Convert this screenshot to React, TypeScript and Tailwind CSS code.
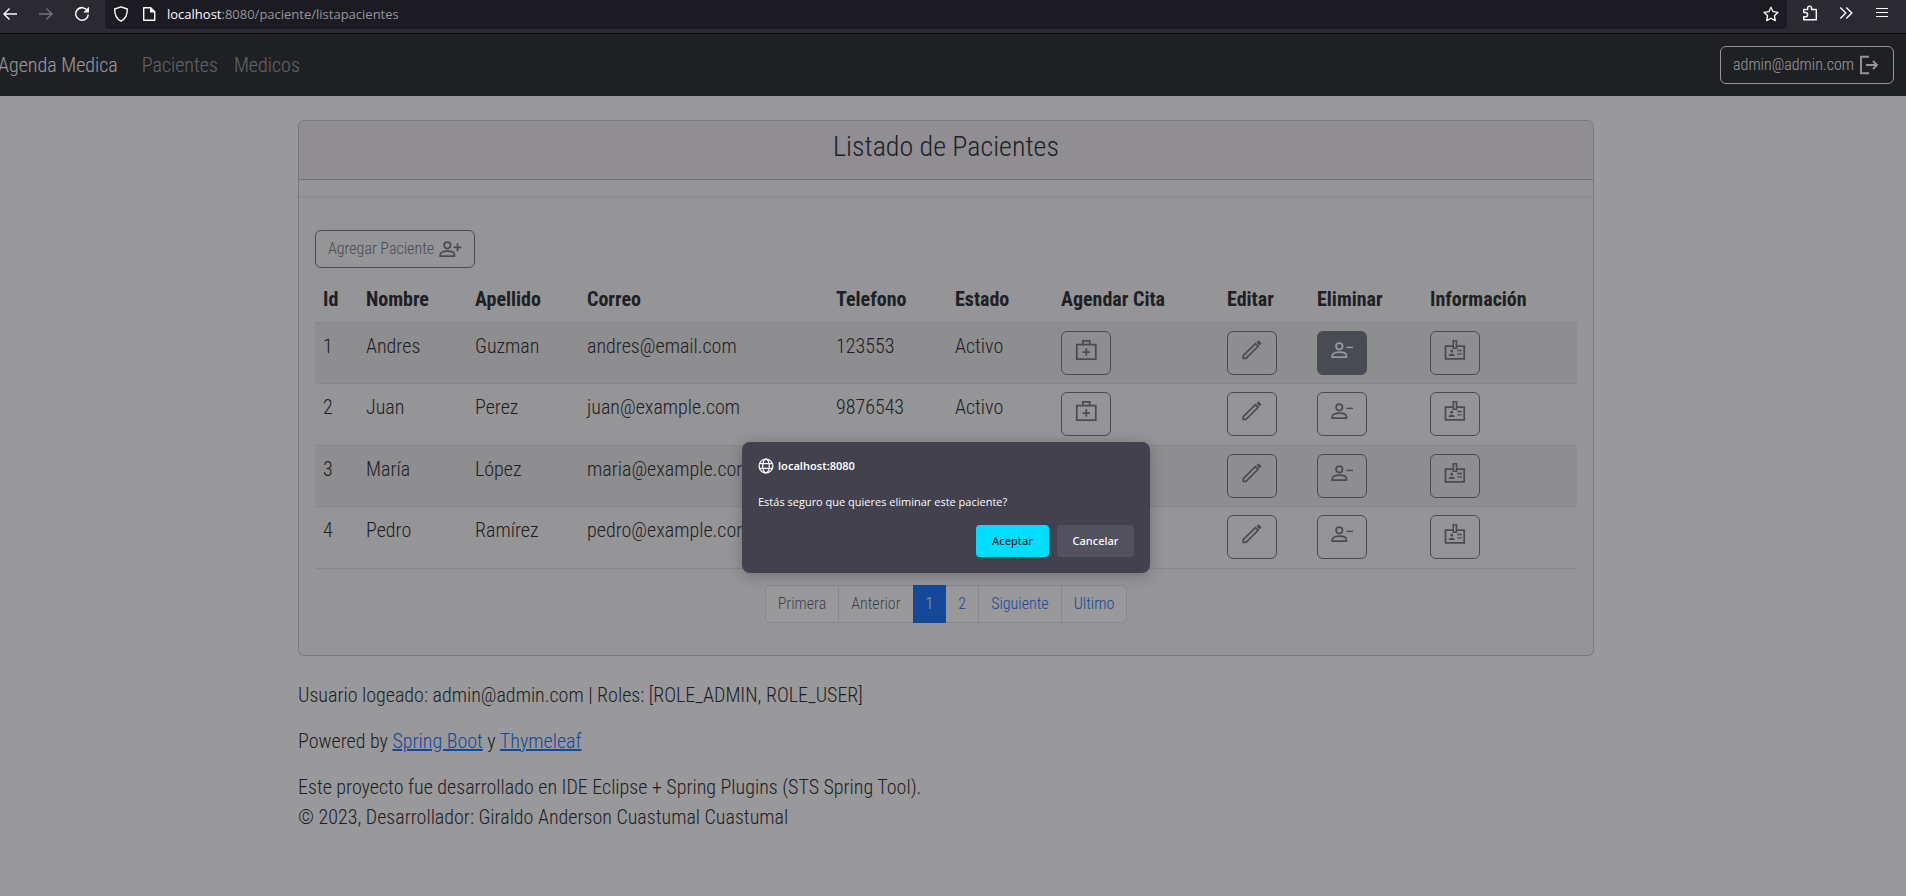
import type { ReactNode } from "react";

type Patient = {
  id: number;
  nombre: string;
  apellido: string;
  correo: string;
  telefono: string;
  estado: string;
};

const patients: Patient[] = [
  { id: 1, nombre: "Andres", apellido: "Guzman", correo: "andres@email.com", telefono: "123553", estado: "Activo" },
  { id: 2, nombre: "Juan", apellido: "Perez", correo: "juan@example.com", telefono: "9876543", estado: "Activo" },
  { id: 3, nombre: "María", apellido: "López", correo: "maria@example.com", telefono: "", estado: "" },
  { id: 4, nombre: "Pedro", apellido: "Ramírez", correo: "pedro@example.com", telefono: "", estado: "" },
];

const columns = [
  { label: "Id", width: "w-[43px]" },
  { label: "Nombre", width: "w-[109px]" },
  { label: "Apellido", width: "w-[112px]" },
  { label: "Correo", width: "w-[249px]" },
  { label: "Telefono", width: "w-[119px]" },
  { label: "Estado", width: "w-[106px]" },
  { label: "Agendar Cita", width: "w-[166px]" },
  { label: "Editar", width: "w-[90px]" },
  { label: "Eliminar", width: "w-[113px]" },
  { label: "Información", width: "w-[155px]" },
];

function Icon({ children, className = "size-6" }: { children: ReactNode; className?: string }) {
  return (
    <svg viewBox="0 0 24 24" fill="none" stroke="currentColor" strokeWidth="1.75" className={className} aria-hidden="true">
      {children}
    </svg>
  );
}

function Person() {
  return (
    <>
      <circle cx="9.3" cy="8.3" r="3.2" />
      <path d="M2.2 19.2v-1.7c0-2.2 3.6-3.4 7.1-3.4s7.1 1.2 7.1 3.4v1.7z" />
    </>
  );
}

const PersonAddIcon = () => (
  <Icon>
    <Person />
    <path d="M19.5 6.3v8M15.5 10.3h8" />
  </Icon>
);

const PersonRemoveIcon = () => (
  <Icon>
    <Person />
    <path d="M16.4 9.4H23" strokeWidth="1.4" />
  </Icon>
);

const MedkitIcon = () => (
  <Icon>
    <path d="M2.8 6.5h19v14.6h-19zM8.8 6.5V2.9h7v3.6M12.3 10.3v7.4M8.6 14H16" />
  </Icon>
);

const PencilIcon = () => (
  <Icon>
    <path d="M3.2 20.4v-2.8L15.4 5.6l2.7 2.7L6 20.4z" strokeWidth="1.7" />
    <path d="M16.7 4.3l1.8-1.8 2.9 2.9-1.8 1.8z" fill="currentColor" strokeWidth=".4" />
  </Icon>
);

const BadgeIcon = () => (
  <Icon>
    <path d="M9.9 8.1H2.5v12.8h18.7V8.1h-7.3" />
    <path d="M10.3 2.8h3.2v7.4h-3.2z" strokeWidth="1.6" />
    <circle cx="8.7" cy="13.2" r="1.4" fill="currentColor" stroke="none" />
    <path d="M5.7 18v-.6c0-1 1.5-1.6 3-1.6s3 .6 3 1.6v.6z" fill="currentColor" stroke="none" />
    <path d="M14.3 12.5h4.5M14.3 15.8h4.5" strokeWidth="1.3" />
  </Icon>
);

const outline = "border border-[#6c757d] text-[#6c757d] rounded-md";

function IconButton({ label, active = false, children }: { label: string; active?: boolean; children: ReactNode }) {
  return (
    <button
      type="button"
      aria-label={label}
      className={`flex h-11 w-[50px] justify-center pt-1.5 ${active ? "rounded-md border border-[#6c757d] bg-[#6c757d] text-white" : outline}`}
    >
      {children}
    </button>
  );
}

function BrowserBar() {
  return (
    <header className="flex h-[34px] items-start border-b border-[#0c0c0d] bg-[#2b2a33] text-[#fbfbfe]">
      <div className="flex h-7 w-[105px] shrink-0 items-center">
        <button type="button" aria-label="Atrás" className="w-[38px]">
          <svg viewBox="0 0 16 16" className="ml-0.5 size-4" fill="none" stroke="currentColor" strokeWidth="1.4">
            <path d="M15 8H2M7.5 2.5L2 8l5.500 5.500" />
          </svg>
        </button>
        <button type="button" aria-label="Adelante" className="w-9 text-[#75747b]">
          <svg viewBox="0 0 16 16" className="size-4" fill="none" stroke="currentColor" strokeWidth="1.4">
            <path d="M1 8h13M8.500 2.500L14 8l-5.500 5.500" />
          </svg>
        </button>
        <button type="button" aria-label="Recargar">
          <svg viewBox="0 0 16 16" className="size-4" fill="none" stroke="currentColor" strokeWidth="1.500">
            <path d="M13.600 5A6.300 6.300 0 1 0 14.300 8.500" />
            <path d="M15 .8v5.700H9.300z" fill="currentColor" stroke="none" />
          </svg>
        </button>
      </div>
      <div className="flex h-[29px] flex-1 items-center rounded-b bg-[#1c1b22] pb-0.5 pl-2 pr-2">
        <svg viewBox="0 0 16 16" className="size-4" fill="none" stroke="currentColor" strokeWidth="1.400" aria-hidden="true">
          <path d="M8 .8l6.300 2.200c.2 5.800-1.800 9.800-6.300 12.200C3.500 12.800 1.500 8.800 1.700 3z" strokeLinejoin="round" />
        </svg>
        <svg viewBox="0 0 16 16" className="ml-3 size-4" fill="none" stroke="currentColor" strokeWidth="1.400" aria-hidden="true">
          <path d="M2.700 1.700h7l4 4v8.600h-11z" strokeLinejoin="round" />
          <path d="M9 1.200v5.300h5.300z" fill="currentColor" stroke="none" />
        </svg>
        <p className="ml-2.5 flex-1 font-['Open_Sans',sans-serif] text-[13px] leading-5 text-[#95949b]">
          <span className="text-[#fbfbfe]">localhost</span>:8080/paciente/listapacientes
        </p>
        <button type="button" aria-label="Marcador">
          <svg viewBox="0 0 16 16" className="size-4" fill="none" stroke="currentColor" strokeWidth="1.300" strokeLinejoin="round">
            <path d="M8 1.200l2.100 4.500 4.900.6-3.600 3.400.9 4.900L8 12.200l-4.300 2.400.9-4.900L1 6.300l4.900-.6z" />
          </svg>
        </button>
      </div>
      <div className="flex h-[26px] w-[119px] shrink-0 items-center pl-[15px]">
        <button type="button" aria-label="Extensiones" className="w-9">
          <svg viewBox="0 0 16 16" className="size-4" fill="none" stroke="currentColor" strokeWidth="1.400" strokeLinejoin="round">
            <path d="M1.700 7.500V4.500h4V3a1.900 1.900 0 0 1 3.800 0v1.500h4.800v10.300H1.700v-3h1.800a2.100 2.100 0 0 0 0-4.300z" />
          </svg>
        </button>
        <button type="button" aria-label="Más herramientas" className="w-9">
          <svg viewBox="0 0 16 16" className="size-4" fill="none" stroke="currentColor" strokeWidth="1.400">
            <path d="M2.300 2.500L7.800 8l-5.500 5.500M8.300 2.500L13.800 8l-5.500 5.500" />
          </svg>
        </button>
        <button type="button" aria-label="Menú">
          <svg viewBox="0 0 16 16" className="size-4" fill="none" stroke="currentColor" strokeWidth="1.200">
            <path d="M2 3.500h12M2 7.500h12M2 11.500h12" />
          </svg>
        </button>
      </div>
    </header>
  );
}

function Navbar() {
  return (
    <nav className="flex h-[62px] items-center bg-[#212529] px-3">
      <a href="#inicio" className="text-xl text-white">Agenda Medica</a>
      <a href="#pacientes" className="ml-6 text-xl text-white/55">Pacientes</a>
      <a href="#medicos" className="ml-4 text-xl text-white/55">Medicos</a>
      <button type="button" className="ml-auto flex h-[38px] items-center gap-[3px] rounded-md border border-[#f8f9fa] px-3 text-base text-[#f8f9fa]">
        admin@admin.com
        <Icon>
          <path d="M12 3.800H4v16.400h8M9 12h11M16 8l4 4-4 4" strokeWidth="1.900" />
        </Icon>
      </button>
    </nav>
  );
}

function PatientTable() {
  return (
    <table className="mt-2 w-full table-fixed border-collapse text-xl leading-[30px]">
      <thead>
        <tr className="h-[46px] border-b border-[#dee2e6]">
          {columns.map((c) => (
            <th key={c.label} scope="col" className={`p-2 text-left font-bold ${c.width}`}>
              {c.label}
            </th>
          ))}
        </tr>
      </thead>
      <tbody>
        {patients.map((p) => (
          <tr key={p.id} className="h-[61px] border-b border-[#dee2e6] align-top odd:bg-black/5 even:h-[62px]">
            <td className="p-2">{p.id}</td>
            <td className="p-2">{p.nombre}</td>
            <td className="p-2">{p.apellido}</td>
            <td className="p-2">{p.correo}</td>
            <td className="p-2">{p.telefono}</td>
            <td className="p-2">{p.estado}</td>
            <td className="p-2"><IconButton label="Agendar cita"><MedkitIcon /></IconButton></td>
            <td className="p-2"><IconButton label="Editar"><PencilIcon /></IconButton></td>
            <td className="p-2"><IconButton label="Eliminar" active={p.id === 1}><PersonRemoveIcon /></IconButton></td>
            <td className="p-2"><IconButton label="Información"><BadgeIcon /></IconButton></td>
          </tr>
        ))}
      </tbody>
    </table>
  );
}

const pages = [
  { label: "Primera", style: "border-[#dee2e6] bg-white text-[#212529bf]" },
  { label: "Anterior", style: "border-[#dee2e6] bg-white text-[#212529bf]" },
  { label: "1", style: "z-10 border-[#0d6efd] bg-[#0d6efd] text-white" },
  { label: "2", style: "border-[#dee2e6] bg-white text-[#0d6efd]" },
  { label: "Siguiente", style: "border-[#dee2e6] bg-white text-[#0d6efd]" },
  { label: "Ultimo", style: "border-[#dee2e6] bg-white text-[#0d6efd]" },
];

function Pagination() {
  return (
    <ul className="my-4 flex justify-center text-base">
      {pages.map((p) => (
        <li key={p.label} className="group -ml-px first:ml-0">
          <a
            href={`#${p.label}`}
            className={`relative block border px-3 py-1.5 group-first:rounded-l-md group-last:rounded-r-md ${p.style}`}
          >
            {p.label}
          </a>
        </li>
      ))}
    </ul>
  );
}

function ConfirmDialog() {
  return (
    <div className="absolute inset-0 z-20 flex items-start justify-center bg-[#1c1b20]/45 pt-[408px]">
      <div
        role="alertdialog"
        aria-labelledby="dialog-title"
        aria-describedby="dialog-text"
        className="w-[408px] rounded-lg bg-[#42414d] p-4 font-['Noto_Sans',sans-serif] text-[11px] font-medium leading-4 text-[#fbfbfe] shadow-[0_2px_14px_rgba(58,57,68,0.4)]"
      >
        <h2 id="dialog-title" className="flex items-center gap-1 font-semibold">
          <svg viewBox="0 0 16 16" className="size-4" fill="none" stroke="currentColor" strokeWidth="1.300" aria-hidden="true">
            <circle cx="8" cy="8" r="6.900" />
            <ellipse cx="8" cy="8" rx="3.300" ry="6.900" />
            <path d="M1.500 5.700h13M1.500 10.300h13" />
          </svg>
          localhost:8080
        </h2>
        <p id="dialog-text" className="mt-5 font-['Open_Sans',sans-serif]">Estás seguro que quieres eliminar este paciente?</p>
        <div className="mt-[15px] flex justify-end gap-2">
          <button type="button" className="h-8 w-[73px] rounded bg-[#00ddff] text-[#2b2a33]">Aceptar</button>
          <button type="button" className="h-8 w-[77px] rounded bg-[#52515e]">Cancelar</button>
        </div>
      </div>
    </div>
  );
}

export default function App() {
  return (
    <div className="flex min-h-screen flex-col overflow-x-clip bg-white">
      <BrowserBar />
      <div className="relative -ml-3.5 flex-1 bg-white font-['Roboto_Condensed',Roboto,sans-serif] font-light text-[#212529]">
        <Navbar />
        <main className="mx-auto mt-6 max-w-[1296px]">
          <section className="rounded-md border border-black/20 bg-[#f8f8f8]">
            <h1 className="h-[59px] rounded-t-[5px] border-b border-black/20 bg-[#eeecf3] pt-[9px] text-center text-[28px] leading-[34px]">
              Listado de Pacientes
            </h1>
            <hr className="my-4 border-t-2 border-[#212529]/5" />
            <div className="p-4">
              <button type="button" className={`flex h-[38px] items-center gap-1 px-3 text-base ${outline}`}>
                Agregar Paciente
                <PersonAddIcon />
              </button>
              <PatientTable />
              <Pagination />
            </div>
          </section>
          <footer className="mt-6 text-xl leading-[30px]">
            <p>Usuario logeado: admin@admin.com | Roles: [ROLE_ADMIN, ROLE_USER]</p>
            <p className="mt-4">
              Powered by <a href="#spring" className="text-[#0d6efd] underline">Spring Boot</a> y{" "}
              <a href="#thymeleaf" className="text-[#0d6efd] underline">Thymeleaf</a>
            </p>
            <p className="mt-4">
              Este proyecto fue desarrollado en IDE Eclipse + Spring Plugins (STS Spring Tool).
              <br />© 2023, Desarrollador: Giraldo Anderson Cuastumal Cuastumal
            </p>
          </footer>
        </main>
        <ConfirmDialog />
      </div>
    </div>
  );
}
